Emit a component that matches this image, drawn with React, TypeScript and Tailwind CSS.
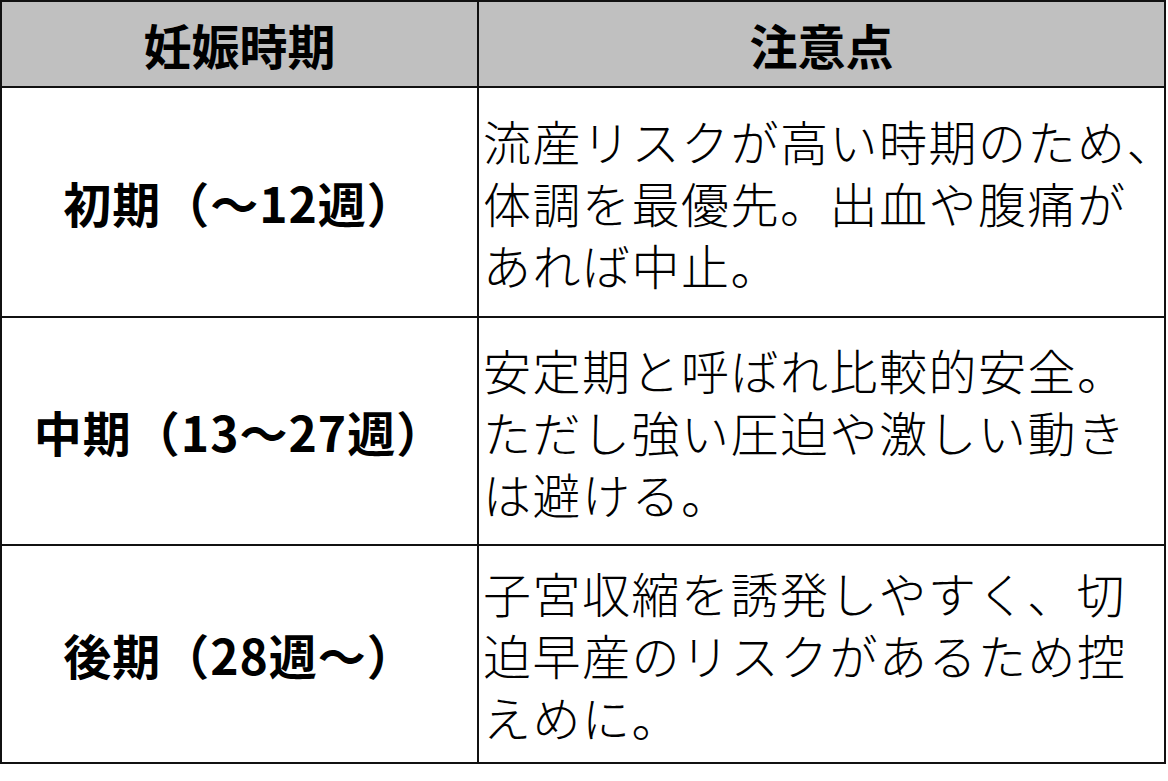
const rows = [
  {
    period: "初期（～12週）",
    height: "h-[230px]",
    lines: ["流産リスクが高い時期のため", "体調を最優先。出血や腹痛が", "あれば中止。"],
    hang: [true, false, false],
  },
  {
    period: "中期（13～27週）",
    height: "h-[228px]",
    lines: ["安定期と呼ばれ比較的安全。", "ただし強い圧迫や激しい動き", "は避ける。"],
    hang: [false, false, false],
  },
  {
    period: "後期（28週～）",
    height: "h-[216px]",
    lines: ["子宮収縮を誘発しやすく、切", "迫早産のリスクがあるため控", "えめに。"],
    hang: [false, false, false],
  },
];

export default function App() {
  return (
    <div
      className="bg-white w-[1168px] h-[781px] text-black"
      style={{ fontFamily: '"Noto Sans CJK JP", "Noto Sans", sans-serif' }}
    >
      <div className="w-[1166px] border-2 border-[#111]">
        <div className="flex h-[86px] bg-[#c0c0c0] border-b-2 border-[#111]">
          <div className="w-[477px] shrink-0 border-r-2 border-[#111] flex items-center justify-center text-[48px] font-bold leading-none">
            妊娠時期
          </div>
          <div className="flex-1 flex items-center justify-center text-[48px] font-bold leading-none">
            注意点
          </div>
        </div>
        {rows.map((row, i) => (
          <div
            key={row.period}
            className={`flex ${row.height} ${i < rows.length - 1 ? "border-b-2 border-[#111]" : ""}`}
          >
            <div className="w-[477px] shrink-0 border-r-2 border-[#111] flex items-center justify-center text-[48px] font-bold leading-none tracking-[1px]">
              {row.period}
            </div>
            <div className="flex-1 flex flex-col justify-center pl-[4px] text-[48px] font-light leading-[62px] tracking-[1.5px]">
              {row.lines.map((line, j) => (
                <div key={line} className="whitespace-nowrap">
                  {line}
                  {row.hang[j] && <span className="inline-block w-[30px] tracking-normal">、</span>}
                </div>
              ))}
            </div>
          </div>
        ))}
      </div>
    </div>
  );
}
